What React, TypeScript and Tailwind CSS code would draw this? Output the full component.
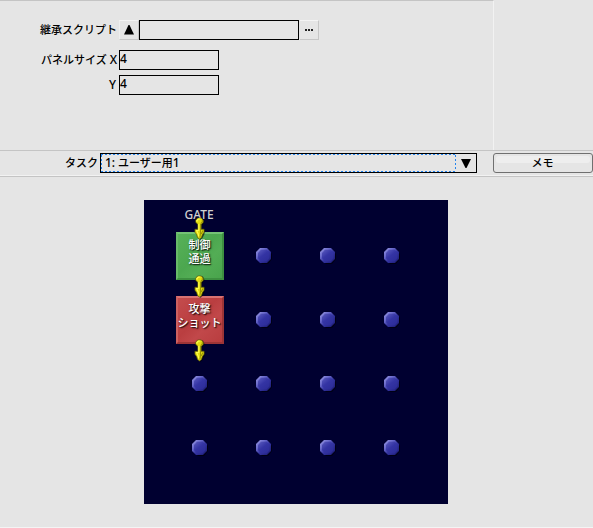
import React from "react";

const uiFont = "font-['Noto_Sans','Noto_Sans_CJK_JP',sans-serif]";

function Arrow({ className }: { className: string }) {
  return (
    <svg className={`absolute ${className}`} width="14" height="24" viewBox="0 0 14 24">
      <path d="M6 1.5h5L12.5 5 10 8.5v4h3l-.5 4.500-2 4-2 2-2-2-2-4V13h3V8L4.500 6V3.500z" fill="#000" opacity=".6" />
      <path d="M5.600 1h3.800l1.900 2.200v2L9.200 7.400v4.800h2.900v3l-1.700 2.300-.9 3-2 1.500-2-1.500-.9-3-1.700-2.300v-3h2.900V7.400L3.700 5.200v-2z" fill="#e2dc10" stroke="#55520c" strokeWidth=".7" />
      <path d="M8.500 7v9.500l-.6 4M11 13.500l-1.800 3.500M10.300 3v2L8.600 6.600" fill="none" stroke="#9a9405" strokeWidth="1.100" />
      <path d="M4.900 4.800V3.600L6.500 2h1.800M6.800 7v6.200l-2.200.2 1.500 3.300.7 2.800" fill="none" stroke="#ffff50" strokeWidth="1.100" />
    </svg>
  );
}

function Dot() {
  return (
    <div className="flex h-16 w-16 items-center justify-center">
      <svg width="18" height="18" viewBox="0 0 18 18">
        <defs>
          <linearGradient id="dot" x1="0" y1="0" x2="1" y2="1">
            <stop offset="0" stopColor="#9c9ce4" />
            <stop offset=".3" stopColor="#6c6ccc" />
            <stop offset=".55" stopColor="#3434a0" />
            <stop offset="1" stopColor="#18186c" />
          </linearGradient>
          <linearGradient id="dotFace" x1="0" y1="0" x2=".8" y2="1">
            <stop offset="0" stopColor="#5c5cc0" />
            <stop offset=".5" stopColor="#3434a4" />
            <stop offset="1" stopColor="#2c2c98" />
          </linearGradient>
        </defs>
        <path d="M6 2h7l4 5v5l-4 5H7l-5-5V6z" fill="#000014" />
        <path d="M5 1h7l4 4v7l-4 4H5l-4-4V5z" fill="url(#dot)" />
        <path d="M6 2.800h5.500l3 3v5.500l-3 3.200h-5L3 11.200V6z" fill="url(#dotFace)" />
      </svg>
    </div>
  );
}

function Tile({ lines, tone }: { lines: string[]; tone: string }) {
  return (
    <div className="flex h-16 w-16 items-center justify-center">
      <div className={`flex h-12 w-12 flex-col items-center border-2 pt-[4px] pr-px text-[11px] font-medium leading-[14px] whitespace-nowrap text-white [text-shadow:1px_1px_1px_#000a,1px_1px_2px_#0008] ${tone}`}>
        {lines.map((line) => (
          <div key={line} className="h-[14px]">{line}</div>
        ))}
      </div>
    </div>
  );
}

const green = "border-t-[#74c275] border-l-[#68b969] border-r-[#3d8f40] border-b-[#3d8f40] bg-[linear-gradient(135deg,#57b159,#4ca74f_45%,#53ad55_65%,#49a44c)]";
const red = "border-t-[#d87272] border-l-[#cc6060] border-r-[#9c3436] border-b-[#9c3436] bg-[linear-gradient(135deg,#c44c4d,#ba3e40_45%,#c1484a_65%,#b93d3f)]";

const hDots = "bg-[repeating-linear-gradient(90deg,#2484ee_0_2px,transparent_2px_4px)]";
const vDots = "bg-[repeating-linear-gradient(180deg,#2484ee_0_2px,transparent_2px_4px)]";

export default function App() {
  return (
    <div className={`flex h-[528px] w-[593px] flex-col overflow-hidden border-b border-[#f4f4f4] bg-[#e5e5e5] text-[11px] font-medium leading-[19px] text-black ${uiFont}`}>
      <div className="h-[150px] w-[494px] border-t border-r border-t-[#c4c4c4] border-r-[#f2f2f2] pt-[19px]">
        <div className="flex h-5">
          <div className="w-[117px] text-right">継承スクリプト</div>
          <button className="ml-[2px] flex h-5 w-5 items-center justify-center border border-t-[#f4f4f4] border-r-[#c6c6c6] border-b-[#c6c6c6] border-l-[#efefef]">
            <svg width="10" height="10" viewBox="0 0 10 10"><path d="M4.500 0h1L10 9.500H0z" /></svg>
          </button>
          <div className="h-5 w-[160px] border border-black" />
          <button className="ml-px flex h-5 w-[19px] items-center justify-center gap-px border-t border-r border-b border-t-[#f4f4f4] border-r-[#c6c6c6] border-b-[#c6c6c6]">
            <span className="h-[2px] w-[2px] bg-[#222]" />
            <span className="h-[2px] w-[2px] bg-[#222]" />
            <span className="h-[2px] w-[2px] bg-[#222]" />
          </button>
        </div>
        <div className="mt-[10px] flex h-5">
          <div className="w-[117px] text-right"><span className="-ml-1">パネルサイズ</span> <span className="text-[12px]">X</span></div>
          <div className="ml-[2px] h-5 w-[100px] border border-black text-[12px] leading-[16px]">4</div>
        </div>
        <div className="mt-[5px] flex h-5">
          <div className="w-[116px] text-right text-[12px]">Y</div>
          <div className="ml-[3px] h-5 w-[100px] border border-black text-[12px] leading-[16px]">4</div>
        </div>
      </div>
      <div className="flex h-[27px] border-t border-b border-[#c4c4c4] pt-[2px] shadow-[inset_0_-1px_0_#f2f2f2]">
        <div className="w-[98px] text-right">タスク</div>
        <div className="ml-[2px] flex h-5 w-[377px] border border-black">
          <div className="flex w-[355px] flex-col">
            <div className={`h-px ${hDots}`} />
            <div className="flex h-4">
              <div className={`w-px ${vDots}`} />
              <div className="flex-1 pl-[3px] leading-[16px]"><span className="text-[12px]">1:</span> ユーザー用<span className="text-[12px]">1</span></div>
              <div className={`w-px ${vDots}`} />
            </div>
            <div className={`h-px ${hDots}`} />
          </div>
          <div className="flex flex-1 items-center justify-center">
            <svg width="10" height="9" viewBox="0 0 10 9"><path d="M0 0h10L5.500 9h-1z" /></svg>
          </div>
        </div>
        <button className="ml-4 flex h-5 w-[100px] flex-col rounded-[3px] border border-[#707070] px-[2px] pt-[2px]">
          <div className="h-[7px] w-full rounded-[3px] bg-[#eeeeee]">
            <div className="-translate-y-[2px] pr-px leading-[18px]">メモ</div>
          </div>
        </button>
      </div>
      <div className="relative mt-[23px] ml-[144px] h-[304px] w-[304px] bg-[#000030] p-6">
        <div className="grid grid-cols-4">
          <Tile lines={["制御", "通過"]} tone={green} />
          <Dot /><Dot /><Dot />
          <Tile lines={["攻撃", "ショット"]} tone={red} />
          <Dot /><Dot /><Dot />
          <Dot /><Dot /><Dot /><Dot />
          <Dot /><Dot /><Dot /><Dot />
        </div>
        <div className="absolute top-[7px] left-[31px] w-12 text-center text-[12px] leading-4 text-[#d0d0d0]">GATE</div>
        <Arrow className="top-[17px] left-[48px]" />
        <Arrow className="top-[75px] left-[48px]" />
        <Arrow className="top-[139px] left-[48px]" />
      </div>
    </div>
  );
}
